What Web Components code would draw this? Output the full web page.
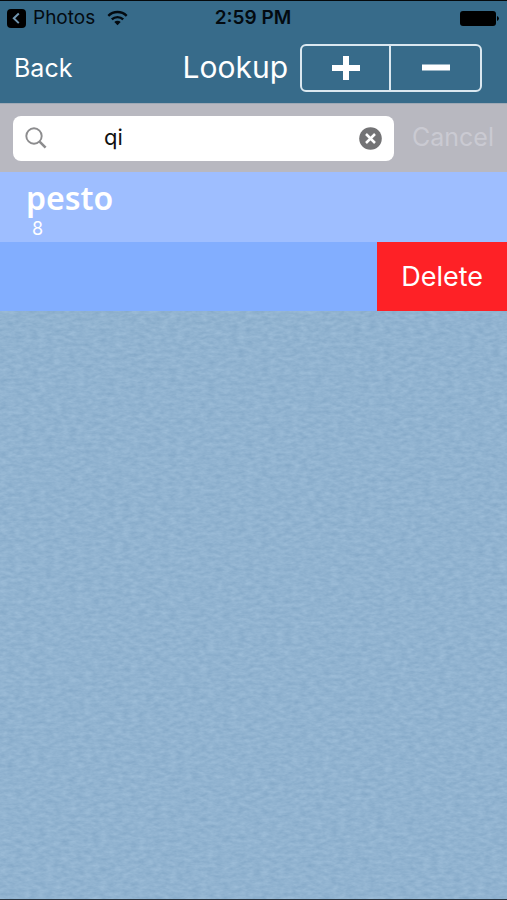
<!DOCTYPE html>
<html lang="en">
<head>
<meta charset="utf-8">
<meta name="viewport" content="width=device-width, initial-scale=1">
<title>Lookup</title>
<style>
  html, body { margin: 0; min-height: 100%; }
  body { font-family: Inter, "Liberation Sans", sans-serif; background: #91b3d0; }
</style>
</head>
<body>
<lookup-app></lookup-app>
<script>
const define = (name, html) => {
  const template = document.createElement('template');
  template.innerHTML = '<style>*{box-sizing:border-box} button,a,input{font:inherit;color:inherit} button{border:0;background:none;padding:0;margin:0}</style>' + html;
  customElements.define(name, class extends HTMLElement {
    constructor() {
      super();
      this.attachShadow({ mode: 'open' }).append(template.content.cloneNode(true));
    }
  });
};

define('status-bar', `
<style>
  :host { display: grid; grid-template-columns: 1fr auto 1fr; align-items: center; height: 32px; padding: 2px 8px 0 7px; color: #030a10; font-size: 19px; line-height: 24px; }
  .left { display: flex; align-items: center; }
  a { display: flex; align-items: center; gap: 7px; text-decoration: none; }
  .wifi { margin-left: 12px; }
  time { font-weight: 600; }
  .battery { justify-self: end; }
  svg { display: block; }
</style>
<div class="left">
  <a href="#photos">
    <svg width="19" height="19" viewBox="0 0 19 19" aria-hidden="true"><rect width="19" height="19" rx="4" fill="#000"/><path d="M11.8 4.5 6.8 9.3l5 4.8" fill="none" stroke="#7196b0" stroke-width="2"/></svg>
    <span>Photos</span>
  </a>
  <svg class="wifi" width="21" height="16" viewBox="0 0 21 16" role="img" aria-label="Wi-Fi"><g fill="none" stroke="#030a10" stroke-width="2.4"><path d="M1.3 5.8a13.2 13.2 0 0 1 18.4 0"/><path d="M4.8 9.4a8.2 8.2 0 0 1 11.4 0"/></g><path d="M10.5 15.2 7.3 12a4.6 4.6 0 0 1 6.4 0z" fill="#030a10"/></svg>
</div>
<time>2:59 PM</time>
<svg class="battery" width="39" height="15" viewBox="0 0 39 15" role="img" aria-label="Battery full"><rect width="36" height="15" rx="3" fill="#000"/><path d="M37 5a2.6 2.6 0 0 1 0 5z" fill="#000"/></svg>
`);

define('segment-control', `
<style>
  :host { display: grid; grid-template-columns: 1fr 1fr; width: 182px; height: 48px; border: 2px solid #dbe8f0; border-radius: 6px; overflow: hidden; }
  button { display: grid; place-items: center; }
  button:first-of-type { border-right: 2px solid #dbe8f0; }
  svg { display: block; }
</style>
<button type="button" aria-label="Add"><svg width="30" height="26" viewBox="0 0 30 26"><path d="M1 13h28M15 1v24" stroke="#fff" stroke-width="6"/></svg></button>
<button type="button" aria-label="Remove"><svg width="30" height="26" viewBox="0 0 30 26"><path d="M1 12.5h28" stroke="#fff" stroke-width="6"/></svg></button>
`);

define('nav-bar', `
<style>
  :host { display: flex; align-items: center; height: 70px; padding: 0 25px 0 14px; color: #fff; }
  button { font-size: 25px; line-height: 32px; }
  h1 { margin: 0 12px 0 auto; font-size: 30px; line-height: 36px; font-weight: 400; padding-bottom: 2px; }
</style>
<button type="button">Back</button>
<h1><slot></slot></h1>
<segment-control></segment-control>
`);

define('search-bar', `
<style>
  :host { display: flex; align-items: center; gap: 18px; height: 69px; padding: 0 13px; background: #b8b8c0; border-top: 1px solid #9fa9b5; }
  .field { flex: 1; min-width: 0; display: flex; align-items: center; height: 45px; padding: 0 12px; background: #fff; border-radius: 8px; }
  input { flex: 1; min-width: 0; border: 0; outline: 0; background: none; padding: 0 0 2px 57px; font-size: 22px; line-height: 28px; color: #111; }
  .cancel { font-size: 25px; line-height: 32px; padding-bottom: 2px; color: #cacad2; }
  svg { display: block; }
</style>
<label class="field">
  <svg width="22" height="22" viewBox="0 0 22 22" aria-hidden="true"><g fill="none" stroke="#8c8c8e"><circle cx="9" cy="9" r="7.7" stroke-width="1.9"/><path d="m14.6 14.6 6 6" stroke-width="2.6"/></g></svg>
  <input type="text" aria-label="Search" value="qi" spellcheck="false">
  <button type="button" aria-label="Clear"><svg width="23" height="23" viewBox="0 0 23 23"><circle cx="11.5" cy="11.5" r="11.3" fill="#737375"/><path d="m7 7 9 9m0-9-9 9" stroke="#fff" stroke-width="2.5"/></svg></button>
</label>
<button class="cancel" type="button" disabled>Cancel</button>
`);

define('word-row', `
<style>
  :host { display: flex; flex-direction: column; height: 70px; padding: 8px 26px 0; background: #9ebeff; color: #fff; }
  .word { display: block; font-family: "Noto Sans", "Open Sans", sans-serif; font-size: 32px; line-height: 36px; font-weight: 600; }
  .count { display: block; padding: 4px 0 0 6px; font-size: 18px; line-height: 18px; }
</style>
<span class="word"><slot></slot></span>
<span class="count"><slot name="count"></slot></span>
`);

define('swiped-row', `
<style>
  :host { display: flex; justify-content: flex-end; height: 69px; background: #82aeff; }
  button { padding: 0 24px; background: #fe2126; color: #fff; font-size: 27px; line-height: 32px; }
</style>
<button type="button">Delete</button>
`);

define('paper-texture', `
<style>
  :host { display: block; background: #91b3d0; border-bottom: 1px solid #293540; overflow: hidden; min-height: 0; }
  svg { display: block; width: 100%; height: 100%; }
</style>
<svg aria-hidden="true">
  <filter id="grain" x="0" y="0" width="100%" height="100%" color-interpolation-filters="sRGB">
    <feTurbulence type="fractalNoise" baseFrequency="0.13 0.28" numOctaves="3" seed="8" result="noise"/>
    <feColorMatrix in="noise" type="matrix" values="0.12 0 0 0 0.509  0.1 0 0 0 0.652  0.08 0 0 0 0.776  0 0 0 0 1"/>
  </filter>
  <rect width="100%" height="100%" filter="url(#grain)"/>
</svg>
`);

define('lookup-app', `
<style>
  :host { display: flex; flex-direction: column; height: 100vh; }
  header { background: #376b8a; border-top: 1px solid #05090c; }
  header, main > :not(paper-texture) { flex: none; }
  main { flex: 1; min-height: 0; display: flex; flex-direction: column; }
  paper-texture { flex: 1; }
</style>
<header>
  <status-bar></status-bar>
  <nav-bar>Lookup</nav-bar>
</header>
<main>
  <search-bar></search-bar>
  <word-row>pesto<span slot="count">8</span></word-row>
  <swiped-row></swiped-row>
  <paper-texture></paper-texture>
</main>
`);
</script>
</body>
</html>
